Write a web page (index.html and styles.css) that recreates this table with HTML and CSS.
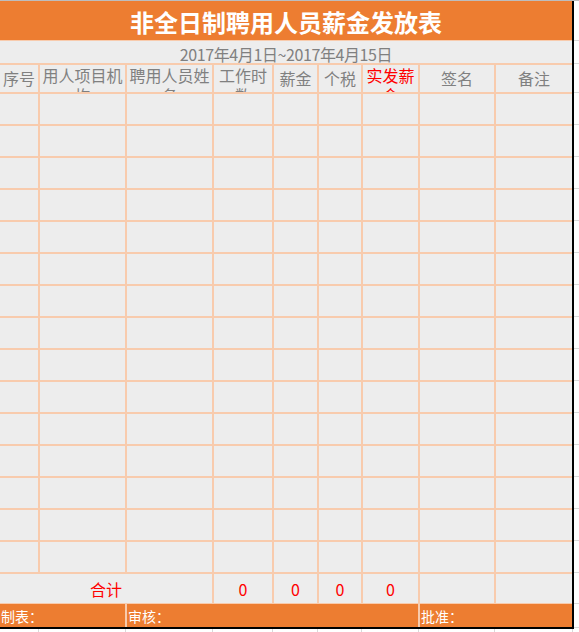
FILE: index.html
```html
<!DOCTYPE html>
<html lang="zh-CN">
<head>
<meta charset="utf-8">
<title>非全日制聘用人员薪金发放表</title>
<link rel="stylesheet" href="styles.css">
</head>
<body>
<div class="page">
  <div class="sheet">
    <div class="title">非全日制聘用人员薪金发放表</div>
    <div class="date">2017年4月1日~2017年4月15日</div>
    <div class="grid">
      <div class="cell head">序号</div>
      <div class="cell head wrap">用人项目机构</div>
      <div class="cell head wrap">聘用人员姓名</div>
      <div class="cell head wrap">工作时数</div>
      <div class="cell head">薪金</div>
      <div class="cell head">个税</div>
      <div class="cell head wrap red">实发薪金</div>
      <div class="cell head">签名</div>
      <div class="cell head">备注</div>

      <div class="cell"></div><div class="cell"></div><div class="cell"></div><div class="cell"></div><div class="cell"></div><div class="cell"></div><div class="cell"></div><div class="cell"></div><div class="cell"></div>
      <div class="cell"></div><div class="cell"></div><div class="cell"></div><div class="cell"></div><div class="cell"></div><div class="cell"></div><div class="cell"></div><div class="cell"></div><div class="cell"></div>
      <div class="cell"></div><div class="cell"></div><div class="cell"></div><div class="cell"></div><div class="cell"></div><div class="cell"></div><div class="cell"></div><div class="cell"></div><div class="cell"></div>
      <div class="cell"></div><div class="cell"></div><div class="cell"></div><div class="cell"></div><div class="cell"></div><div class="cell"></div><div class="cell"></div><div class="cell"></div><div class="cell"></div>
      <div class="cell"></div><div class="cell"></div><div class="cell"></div><div class="cell"></div><div class="cell"></div><div class="cell"></div><div class="cell"></div><div class="cell"></div><div class="cell"></div>
      <div class="cell"></div><div class="cell"></div><div class="cell"></div><div class="cell"></div><div class="cell"></div><div class="cell"></div><div class="cell"></div><div class="cell"></div><div class="cell"></div>
      <div class="cell"></div><div class="cell"></div><div class="cell"></div><div class="cell"></div><div class="cell"></div><div class="cell"></div><div class="cell"></div><div class="cell"></div><div class="cell"></div>
      <div class="cell"></div><div class="cell"></div><div class="cell"></div><div class="cell"></div><div class="cell"></div><div class="cell"></div><div class="cell"></div><div class="cell"></div><div class="cell"></div>
      <div class="cell"></div><div class="cell"></div><div class="cell"></div><div class="cell"></div><div class="cell"></div><div class="cell"></div><div class="cell"></div><div class="cell"></div><div class="cell"></div>
      <div class="cell"></div><div class="cell"></div><div class="cell"></div><div class="cell"></div><div class="cell"></div><div class="cell"></div><div class="cell"></div><div class="cell"></div><div class="cell"></div>
      <div class="cell"></div><div class="cell"></div><div class="cell"></div><div class="cell"></div><div class="cell"></div><div class="cell"></div><div class="cell"></div><div class="cell"></div><div class="cell"></div>
      <div class="cell"></div><div class="cell"></div><div class="cell"></div><div class="cell"></div><div class="cell"></div><div class="cell"></div><div class="cell"></div><div class="cell"></div><div class="cell"></div>
      <div class="cell"></div><div class="cell"></div><div class="cell"></div><div class="cell"></div><div class="cell"></div><div class="cell"></div><div class="cell"></div><div class="cell"></div><div class="cell"></div>
      <div class="cell"></div><div class="cell"></div><div class="cell"></div><div class="cell"></div><div class="cell"></div><div class="cell"></div><div class="cell"></div><div class="cell"></div><div class="cell"></div>
      <div class="cell"></div><div class="cell"></div><div class="cell"></div><div class="cell"></div><div class="cell"></div><div class="cell"></div><div class="cell"></div><div class="cell"></div><div class="cell"></div>

      <div class="cell total span3">合计</div>
      <div class="cell total">0</div>
      <div class="cell total">0</div>
      <div class="cell total">0</div>
      <div class="cell total">0</div>
      <div class="cell total"></div>
      <div class="cell total"></div>
    </div>
    <div class="footer">
      <div class="fcell f1">制表：</div>
      <div class="fcell f2">审核：</div>
      <div class="fcell f3">批准：</div>
    </div>
  </div>
  <div class="strip">
    <div class="s s-title"></div>
    <div class="s s-date"></div>
    <div class="s s-head"></div>
    <div class="s s-row"></div><div class="s s-row"></div><div class="s s-row"></div><div class="s s-row"></div><div class="s s-row"></div>
    <div class="s s-row"></div><div class="s s-row"></div><div class="s s-row"></div><div class="s s-row"></div><div class="s s-row"></div>
    <div class="s s-row"></div><div class="s s-row"></div><div class="s s-row"></div><div class="s s-row"></div><div class="s s-row"></div>
    <div class="s s-total"></div>
    <div class="s s-foot"></div>
  </div>
</div>
<div class="below">
  <div class="b"></div><div class="b"></div><div class="b"></div><div class="b"></div><div class="b"></div><div class="b"></div><div class="b"></div><div class="b"></div><div class="b"></div>
</div>
</body>
</html>
```

FILE: styles.css
```css
* { box-sizing: border-box; }

html, body {
  margin: 0;
  padding: 0;
  background: #ffffff;
  font-family: "Noto Sans CJK SC", "Noto Sans", sans-serif;
}

.page {
  display: flex;
  border-top: 1px solid #bdbdbd;
  width: 579px;
}

.sheet {
  width: 574px;
  border-right: 2px solid #000000;
  background: #ededed;
}

.title {
  height: 40px;
  background: #ed7d31;
  border-bottom: 1px solid #f8cbad;
  color: #ffffff;
  font-weight: bold;
  font-size: 24px;
  line-height: 35px;
  padding-top: 3px;
  text-align: center;
  letter-spacing: 0px;
}

.date {
  height: 22px;
  line-height: 18px;
  padding-top: 4px;
  font-size: 16px;
  color: #808080;
  text-align: center;
  letter-spacing: -0.4px;
}

.grid {
  display: grid;
  grid-template-columns: 38px 85px 85px 58px 43px 42px 55px 74px 76px;
  grid-template-rows: 27px repeat(15, 30px) 29px;
  gap: 2px;
  padding: 2px 0 1px 0;
  background: #f8cbad;
}

.cell {
  background: #ededed;
  overflow: hidden;
}

.head {
  font-size: 16px;
  color: #808080;
  text-align: center;
  line-height: 27px;
}

.head.wrap {
  line-height: 20px;
}

.red { color: #ff0000; }

.total {
  color: #ff0000;
  font-size: 16px;
  text-align: center;
  line-height: 31px;
}

.span3 { grid-column: 1 / 4; }

.footer {
  display: grid;
  grid-template-columns: 38px 85px 85px 58px 43px 42px 55px 74px 76px;
  column-gap: 2px;
  height: 25px;
  background: #f8cbad;
  border-bottom: 2px solid #000000;
}

.fcell {
  background: #ed7d31;
  color: #ffffff;
  font-size: 14px;
  line-height: 21px;
  padding-top: 2px;
  padding-left: 1px;
  white-space: nowrap;
}

.f1 { grid-column: 1 / 3; }
.f2 { grid-column: 3 / 8; }
.f3 { grid-column: 8 / 10; }

.strip {
  width: 5px;
  display: flex;
  flex-direction: column;
}

.s { border-bottom: 1px solid #d9d9d9; }
.s-title { height: 40px; }
.s-date { height: 23px; }
.s-head { height: 29px; }
.s-row { height: 32px; }
.s-total { height: 31px; }
.s-foot { height: 24px; }

.below {
  display: grid;
  grid-template-columns: 38px 85px 85px 58px 43px 42px 55px 74px 76px;
  column-gap: 2px;
  height: 10px;
}

.b {
  box-shadow: 1px 0 0 #d9d9d9;
}
```
